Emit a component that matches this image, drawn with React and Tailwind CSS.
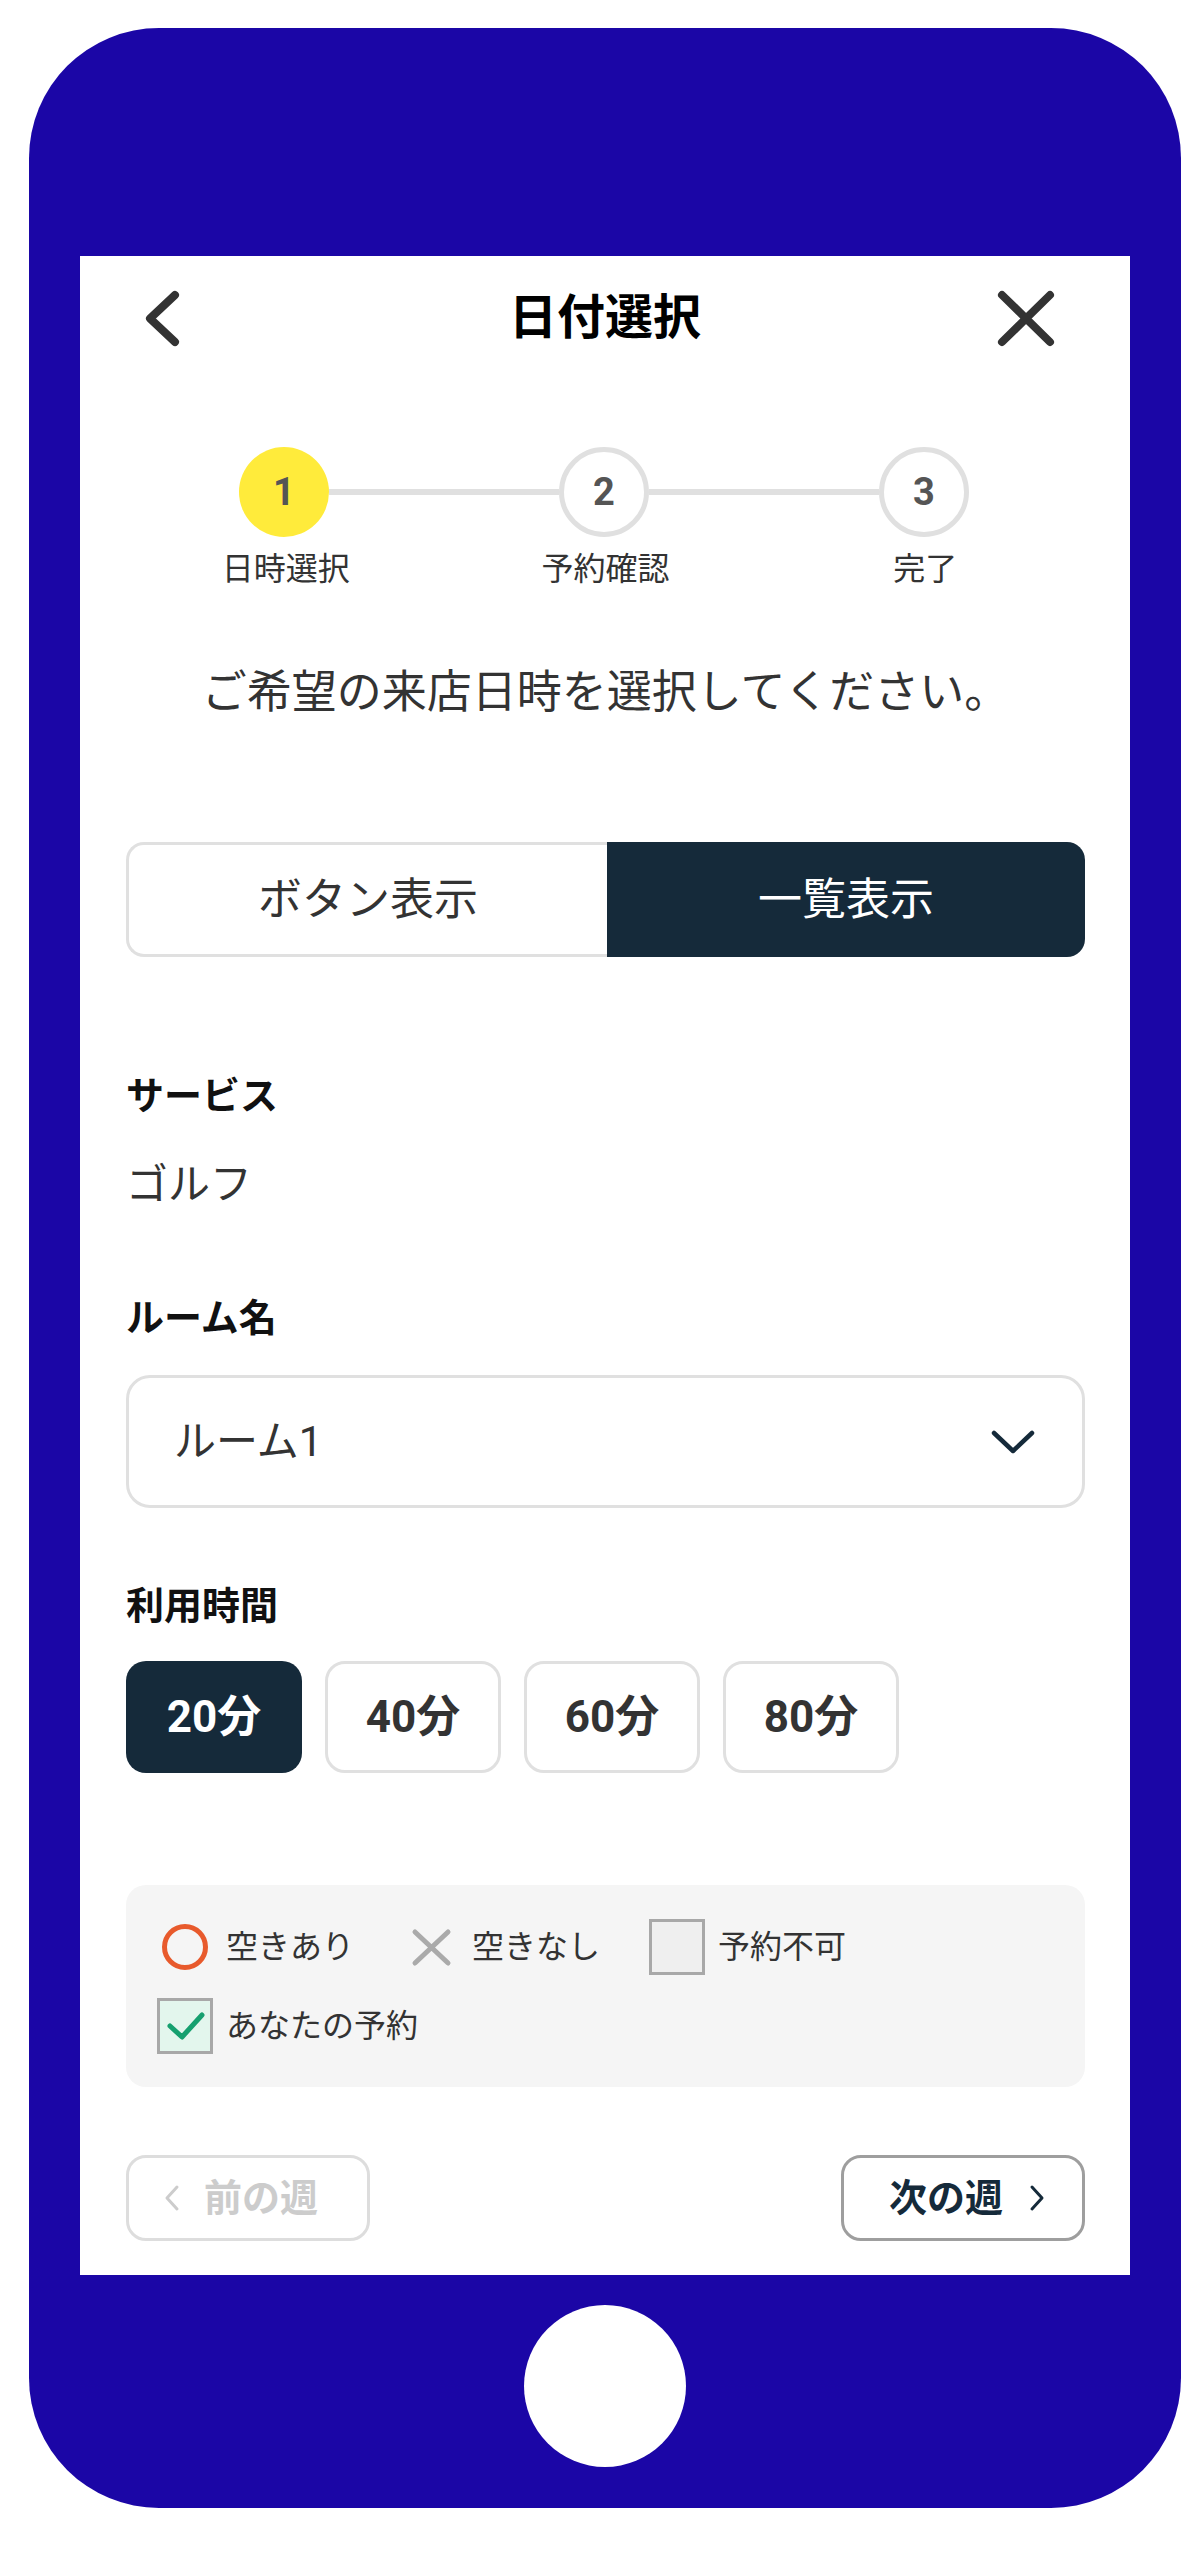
import React from "react";

function BackIcon() {
  return (
    <svg width="40" height="64" viewBox="0 0 40 64" fill="none">
      <path d="M33 9 L8 32.5 L33 56" stroke="#333333" strokeWidth="8" strokeLinecap="round" strokeLinejoin="round" />
    </svg>
  );
}

function CloseIcon() {
  return (
    <svg width="66" height="64" viewBox="0 0 66 64" fill="none">
      <path d="M9 9 L57 56 M57 9 L9 56" stroke="#333333" strokeWidth="8" strokeLinecap="round" />
    </svg>
  );
}

function SmallChevron({ dir, color }) {
  return (
    <svg width="20" height="30" viewBox="0 0 20 30" fill="none">
      {dir === "left" ? (
        <path d="M15 4 L5 15 L15 26" stroke={color} strokeWidth="3" strokeLinecap="round" strokeLinejoin="round" />
      ) : (
        <path d="M5 4 L15 15 L5 26" stroke={color} strokeWidth="3" strokeLinecap="round" strokeLinejoin="round" />
      )}
    </svg>
  );
}

function StepCircle({ n, active }) {
  return active ? (
    <div className="w-[90px] h-[90px] rounded-full bg-[#ffeb3b] flex items-center justify-center text-[38px] font-bold text-[#555555] leading-none shrink-0">
      {n}
    </div>
  ) : (
    <div className="w-[90px] h-[90px] rounded-full bg-white border-[5px] border-[#e0e0e0] flex items-center justify-center text-[38px] font-bold text-[#555555] leading-none shrink-0">
      {n}
    </div>
  );
}

function LegendItem({ icon, label }) {
  return (
    <div className="flex items-center gap-[13px]">
      <div className="w-[56px] h-[56px] flex items-center justify-center shrink-0">{icon}</div>
      <span className="text-[32px] leading-[48px] text-[#333333] whitespace-nowrap">{label}</span>
    </div>
  );
}

export default function App() {
  const durations = ["20分", "40分", "60分", "80分"];
  return (
    <div className="w-[1183px] h-[2560px] bg-white pt-[28px] pl-[29px] font-[Roboto,'Noto_Sans_CJK_JP',sans-serif]">
      <div className="w-[1152px] h-[2480px] bg-[#1b06a6] rounded-[130px] pt-[228px] px-[51px] flex flex-col">
        {/* Screen */}
        <div className="w-[1050px] h-[2019px] bg-white flex flex-col">
          {/* Header */}
          <div className="h-[124px] grid grid-cols-[1fr_auto_1fr] items-center">
            <div className="flex justify-start pl-[62px]">
              <BackIcon />
            </div>
            <div className="text-[48px] font-bold text-black leading-none">日付選択</div>
            <div className="flex justify-end pr-[71px]">
              <CloseIcon />
            </div>
          </div>

          <div className="pl-[46px] pr-[45px] flex flex-col">
            {/* Stepper */}
            <div className="mt-[67px] flex items-center pl-[113px] pr-[116px]">
              <StepCircle n="1" active />
              <div className="flex-1 h-[6px] bg-[#e0e0e0]" />
              <StepCircle n="2" />
              <div className="flex-1 h-[6px] bg-[#e0e0e0]" />
              <StepCircle n="3" />
            </div>
            <div className="mt-[8px] grid grid-cols-3 text-center text-[32px] leading-[48px] text-[#333333]">
              <span>日時選択</span>
              <span>予約確認</span>
              <span>完了</span>
            </div>

            {/* Instruction */}
            <p className="mt-[67px] text-center text-[45px] leading-[66px] text-[#333333]">
              ご希望の来店日時を選択してください。
            </p>

            {/* Toggle */}
            <div className="mt-[116px] h-[115px] flex">
              <div className="flex-1 flex items-center justify-center border-[3px] border-r-0 border-[#e0e0e0] rounded-l-[18px] bg-white text-[44px] text-[#333333]">
                ボタン表示
              </div>
              <div className="flex-1 flex items-center justify-center rounded-r-[18px] bg-[#152a3a] text-[44px] text-white">
                一覧表示
              </div>
            </div>

            {/* Service */}
            <div className="mt-[111px] text-[38px] leading-[57px] font-bold text-[#111111]">サービス</div>
            <div className="mt-[28px] text-[42px] leading-[63px] text-[#333333]">ゴルフ</div>

            {/* Room */}
            <div className="mt-[74px] text-[38px] leading-[57px] font-bold text-[#111111]">ルーム名</div>
            <div className="mt-[28px] h-[133px] border-[3px] border-[#e0e0e0] rounded-[24px] flex items-center justify-between pl-[45px] pr-[46px]">
              <span className="text-[42px] text-[#333333]">ルーム1</span>
              <svg width="46" height="28" viewBox="0 0 46 28" fill="none">
                <path d="M4 5 L23 23 L42 5" stroke="#152a3a" strokeWidth="4.5" strokeLinecap="round" strokeLinejoin="round" />
              </svg>
            </div>

            {/* Duration */}
            <div className="mt-[70px] text-[38px] leading-[57px] font-bold text-[#111111]">利用時間</div>
            <div className="mt-[26px] flex gap-[23px]">
              {durations.map((d, i) =>
                i === 0 ? (
                  <div key={d} className="w-[176px] h-[112px] rounded-[20px] bg-[#152a3a] flex items-center justify-center text-[44px] font-bold text-white">
                    {d}
                  </div>
                ) : (
                  <div key={d} className="w-[176px] h-[112px] rounded-[20px] border-[3px] border-[#e0e0e0] bg-white flex items-center justify-center text-[44px] font-bold text-[#333333]">
                    {d}
                  </div>
                )
              )}
            </div>

            {/* Legend */}
            <div className="mt-[112px] h-[202px] bg-[#f5f5f5] rounded-[20px] pt-[34px] pl-[31px] flex flex-col gap-[23px]">
              <div className="flex items-center gap-[49px]">
                <LegendItem
                  icon={<div className="w-[46px] h-[46px] rounded-full border-[5px] border-[#e85a2c]" />}
                  label="空きあり"
                />
                <LegendItem
                  icon={
                    <svg width="56" height="56" viewBox="0 0 56 56" fill="none">
                      <path d="M12 13 L45 44 M45 13 L12 44" stroke="#aaaaaa" strokeWidth="5" strokeLinecap="round" />
                    </svg>
                  }
                  label="空きなし"
                />
                <LegendItem
                  icon={<div className="w-[56px] h-[56px] bg-[#efefef] border-[3px] border-[#a8a8a8]" />}
                  label="予約不可"
                />
              </div>
              <div className="flex items-center">
                <LegendItem
                  icon={
                    <div className="w-[56px] h-[56px] bg-[#e3f6ed] border-[3px] border-[#a8a8a8] relative">
                      <svg className="absolute left-[-3px] top-[-3px]" width="56" height="56" viewBox="0 0 56 56" fill="none">
                        <path d="M13 28 L25 39 L45 17" stroke="#16a06f" strokeWidth="5" strokeLinecap="round" strokeLinejoin="round" />
                      </svg>
                    </div>
                  }
                  label="あなたの予約"
                />
              </div>
            </div>

            {/* Week nav */}
            <div className="mt-[68px] flex justify-between">
              <div className="w-[244px] h-[86px] rounded-[20px] border-[3px] border-[#dddddd] flex items-center pl-[33px] gap-[22px]">
                <SmallChevron dir="left" color="#cccccc" />
                <span className="text-[38px] font-bold text-[#cccccc] leading-none">前の週</span>
              </div>
              <div className="w-[244px] h-[86px] rounded-[20px] border-[3px] border-[#9e9e9e] flex items-center pl-[45px] gap-[24px]">
                <span className="text-[38px] font-bold text-[#152a3a] leading-none">次の週</span>
                <SmallChevron dir="right" color="#152a3a" />
              </div>
            </div>
          </div>
        </div>

        {/* Home button */}
        <div className="mt-[30px] mx-auto w-[162px] h-[162px] rounded-full bg-white" />
      </div>
    </div>
  );
}
